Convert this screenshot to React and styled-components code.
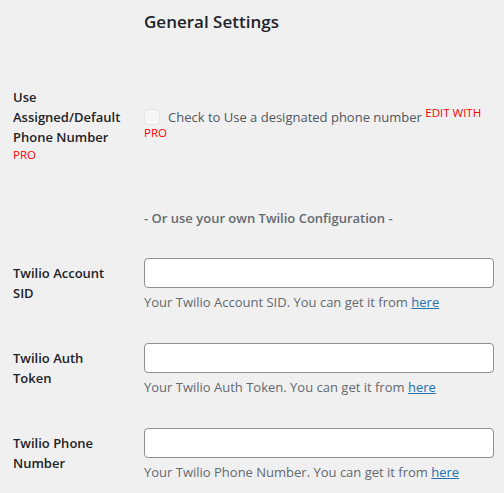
import styled, { createGlobalStyle } from "styled-components";

const GlobalStyle = createGlobalStyle`
  html, body {
    margin: 0;
    padding: 0;
    background: #f0f0f1;
  }
  body {
    font-family: "Open Sans", "Liberation Sans", sans-serif;
    font-size: 13px;
    color: #1d2327;
  }
`;

const fields = [
  {
    label: "Twilio Account SID",
    desc: "Your Twilio Account SID. You can get it from",
  },
  {
    label: "Twilio Auth Token",
    desc: "Your Twilio Auth Token. You can get it from",
  },
  {
    label: "Twilio Phone Number",
    desc: "Your Twilio Phone Number. You can get it from",
  },
];

export default function App() {
  return (
    <>
      <GlobalStyle />
      <Page>
        <Row>
          <Th />
          <Td $top={10} $bottom={33}>
            <Heading>General Settings</Heading>
          </Td>
        </Row>

        <Row>
          <Th $bottom={30}>
            Use Assigned/Default Phone Number
            <LabelPro>PRO</LabelPro>
          </Th>
          <Td $top={40}>
            <Check type="checkbox" disabled />
            <CheckText>Check to Use a designated phone number</CheckText>{" "}
            <Sup>EDIT WITH PRO</Sup>
          </Td>
        </Row>

        <Row>
          <Th />
          <Td>
            <Separator>- Or use your own Twilio Configuration -</Separator>
          </Td>
        </Row>

        {fields.map((f) => (
          <Row key={f.label}>
            <Th>{f.label}</Th>
            <Td>
              <Input type="text" />
              <Desc>
                {f.desc} <Link href="#">here</Link>
              </Desc>
            </Td>
          </Row>
        ))}
      </Page>
    </>
  );
}

const Page = styled.div`
  width: 504px;
`;

const Row = styled.div`
  display: grid;
  grid-template-columns: 144px 1fr;
  align-items: start;
`;

const Th = styled.div`
  padding: 20px 21px ${(p) => p.$bottom ?? 20}px 13px;
  font-weight: 600;
  line-height: 20px;
  color: #1d2327;
`;

const Td = styled.div`
  padding: ${(p) => p.$top ?? 15}px 10px ${(p) => p.$bottom ?? 15}px 0;
  line-height: 20px;
`;

const Heading = styled.h2`
  margin: 0;
  font-size: 17px;
  font-weight: 600;
  line-height: 24px;
  color: #1d2327;
`;

const LabelPro = styled.span`
  display: block;
  font-size: 11.5px;
  font-weight: 400;
  line-height: 16px;
  color: #ff0000;
`;

const Check = styled.input`
  appearance: none;
  width: 16px;
  height: 16px;
  margin: 0 8px 0 0;
  vertical-align: -3px;
  border: 1px solid #e2e4e7;
  border-radius: 4px;
  background: #f6f7f7;
`;

const CheckText = styled.span`
  color: #50575e;
`;

const Sup = styled.span`
  font-size: 11.5px;
  vertical-align: 5px;
  line-height: 0;
  color: #ff0000;
`;

const Separator = styled.div`
  font-weight: 600;
  color: #646970;
`;

const Input = styled.input`
  display: block;
  box-sizing: border-box;
  width: 100%;
  height: 30px;
  margin: 0;
  padding: 0 8px;
  border: 1px solid #8c8f94;
  border-radius: 4px;
  background: #fff;
  font: inherit;
`;

const Desc = styled.p`
  margin: 4px 0 0;
  line-height: 21px;
  color: #646970;
`;

const Link = styled.a`
  color: #2271b1;
  text-decoration: underline;
`;
